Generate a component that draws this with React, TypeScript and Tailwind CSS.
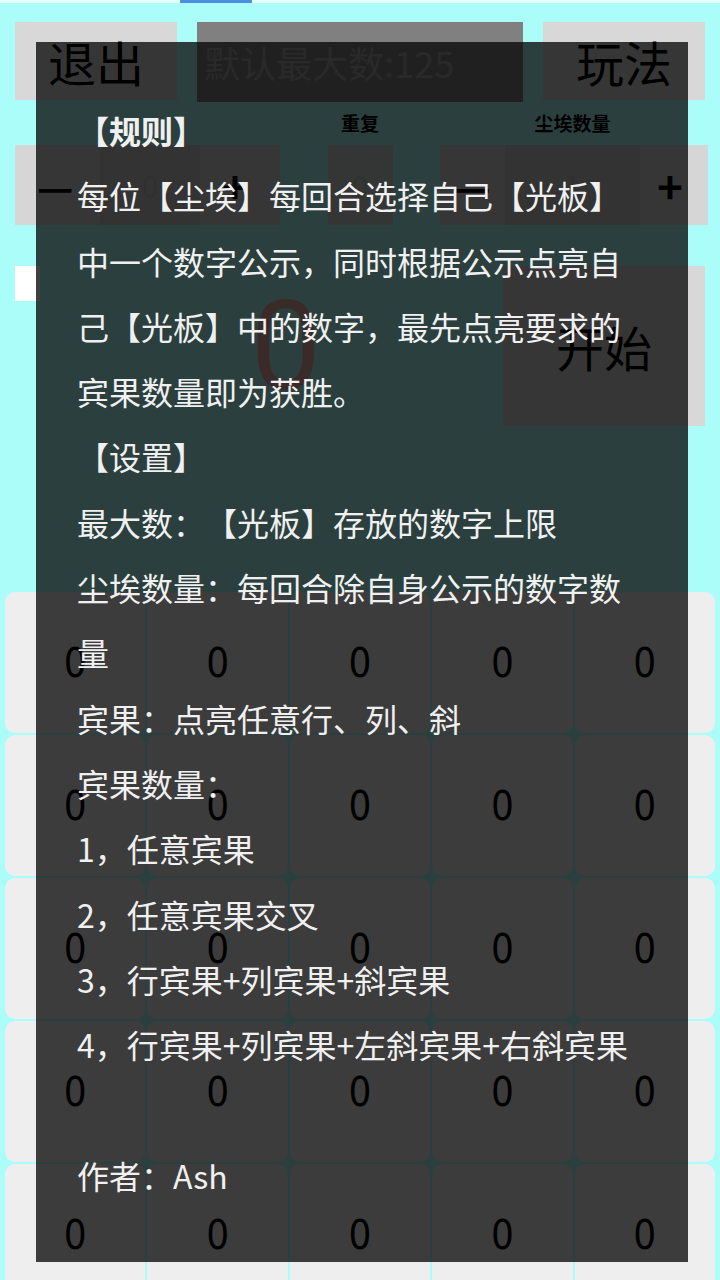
const ruleLines = [
  '每位【尘埃】每回合选择自己【光板】',
  '中一个数字公示，同时根据公示点亮自',
  '己【光板】中的数字，最先点亮要求的',
  '宾果数量即为获胜。',
]

const settingLines = [
  '最大数：【光板】存放的数字上限',
  '尘埃数量：每回合除自身公示的数字数',
  '量',
  '宾果：点亮任意行、列、斜',
  '宾果数量：',
  '1，任意宾果',
  '2，任意宾果交叉',
  '3，行宾果+列宾果+斜宾果',
  '4，行宾果+列宾果+左斜宾果+右斜宾果',
]

const cells = Array.from({ length: 25 }, (_, i) => i)

export default function App() {
  return (
    <div
      className="relative h-[1280px] w-[720px] overflow-hidden bg-[#aafdf8]"
      style={{ fontFamily: '"Noto Sans CJK SC", "Noto Sans", sans-serif' }}
    >
      {/* status strip */}
      <div className="flex h-[3px] bg-[#e6fffd]">
        <div className="ml-[180px] w-[72px] bg-[#4a8fe0]" />
      </div>

      {/* top bar */}
      <div className="flex px-[15px] pt-[19px]">
        <button className="flex h-[78px] w-[163px] items-center justify-center bg-[#d8d8d8] text-[48px] leading-none text-black">
          退出
        </button>
        <div className="ml-[20px] flex h-[80px] w-[327px] items-center bg-[#808080] pl-[7px] text-[36px] leading-none text-[#a4a4a4]">
          默认最大数:125
        </div>
        <button className="ml-[20px] flex h-[78px] w-[163px] items-center justify-center bg-[#d8d8d8] text-[48px] leading-none text-black">
          玩法
        </button>
      </div>

      {/* labels */}
      <div className="grid h-[43px] grid-cols-[85px_100px_80px_160px_65px_135px_68px] items-center px-[15px] text-[19px] font-bold text-black">
        <div className="col-start-4 text-center">重复</div>
        <div className="col-start-6 text-center">尘埃数量</div>
      </div>

      {/* steppers */}
      <div className="grid h-[80px] grid-cols-[85px_100px_80px_160px_65px_135px_68px] px-[15px] text-black">
        <div className="flex items-center bg-[#d6d6d6] pl-[22px] text-[40px] font-bold leading-none">—</div>
        <div className="flex items-center justify-center bg-[#cccccc] text-[30px] text-[#c0c0c0]">0</div>
        <div className="flex items-center justify-center bg-[#d6d6d6] pr-[10px] text-[44px] font-bold leading-none">+</div>
        <div className="flex items-center justify-center">
          <div className="flex h-full w-[65px] items-center justify-center bg-[#cfd8d6] text-[30px] text-[#c4c4c4]">0</div>
        </div>
        <div className="flex items-center justify-center bg-[#d6d6d6] text-[40px] font-bold leading-none">—</div>
        <div className="flex items-center justify-center bg-[#cccccc] text-[30px] text-[#c0c0c0]">1</div>
        <div className="flex items-center justify-center bg-[#d6d6d6] pr-[8px] text-[44px] font-bold leading-none">+</div>
      </div>

      {/* start row */}
      <div className="mt-[41px] flex h-[160px] px-[15px]">
        <div className="h-[35px] w-[25px] bg-white" />
        <div className="flex w-[444px] items-center justify-center pl-[50px]">
          <span className="text-[125px] leading-none text-[#e8a8a0]" style={{ fontFamily: 'Roboto, sans-serif' }}>
            0
          </span>
        </div>
        <button className="ml-[21px] flex w-[203px] items-center justify-center bg-[#d8d8d8] text-[48px] leading-none text-black">
          开始
        </button>
      </div>

      {/* board */}
      <div className="mt-[166px] grid grid-cols-5 gap-[2px] px-[5px]">
        {cells.map((i) => (
          <div
            key={i}
            className="flex h-[141px] items-center justify-center rounded-[10px] bg-[#eeeeee] text-[40px] text-black"
            style={{ fontFamily: '"DejaVu Sans Condensed", Roboto, sans-serif' }}
          >
            0
          </div>
        ))}
      </div>

      {/* rules overlay */}
      <div className="absolute left-[36px] top-[42px] h-[1220px] w-[652px] bg-black/75 pl-[41px] pt-[56px] text-[32px] leading-[65.3px] text-[#f0f0f0] [text-spacing-trim:space-all]">
        <div className="font-semibold">【规则】</div>
        {ruleLines.map((line) => (
          <div key={line}>{line}</div>
        ))}
        <div>【设置】</div>
        {settingLines.map((line) => (
          <div key={line} className="whitespace-nowrap">
            {line}
          </div>
        ))}
        <div className="h-[65.3px]" />
        <div>作者：Ash</div>
      </div>
    </div>
  )
}
